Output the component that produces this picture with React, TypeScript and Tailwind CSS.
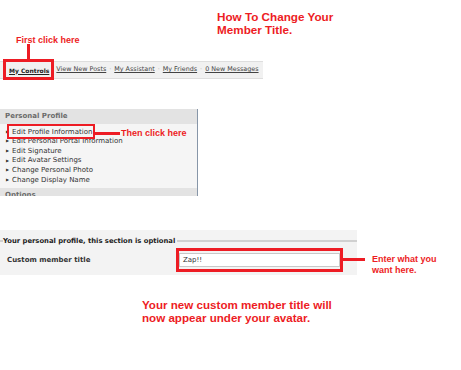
const NAV = ["View New Posts", "My Assistant", "My Friends", "0 New Messages"];

const PROFILE_LINKS = [
  "Edit Profile Information",
  "Edit Personal Portal Information",
  "Edit Signature",
  "Edit Avatar Settings",
  "Change Personal Photo",
  "Change Display Name",
];

const red = "text-[#ed1c24] font-bold [font-family:'Liberation_Sans',Arial,sans-serif]";

export default function App() {
  return (
    <div className="relative w-[461px] h-[370px] overflow-hidden bg-white [font-family:'DejaVu_Sans',Verdana,sans-serif]">
      {/* Top nav strip */}
      <div className="mt-[61px] flex h-[18px] w-[263px] items-center border-y border-[#dedede] bg-[#f1f1f1] pl-[9px] text-[6.4px] text-[#444]">
        <span className="mr-[7px] text-[6px] font-bold text-[#222] underline">My Controls</span>
        {NAV.map((n, i) => (
          <span key={n} className="flex items-center">
            {i > 0 && <span className="mx-[3px] text-[#aaa]">·</span>}
            <span className="underline">{n}</span>
          </span>
        ))}
      </div>

      {/* Personal profile menu */}
      <div className="mt-[30px] h-[87px] w-[198px] overflow-hidden border-r border-[#8796a8] bg-[#f5f5f5]">
        <div className="flex h-[15px] items-center bg-[#e3e3e3] pl-[5px] text-[7px] font-bold text-[#6b6b6b]">
          Personal Profile
        </div>
        <ul className="pt-[3px] pb-[3px]">
          {PROFILE_LINKS.map((l) => (
            <li key={l} className="flex h-[9.6px] items-center pl-[6px] text-[7px] text-[#333]">
              <span className="mr-[3px] text-[4px] text-[#333]">▶</span>
              {l}
            </li>
          ))}
        </ul>
        <div className="flex h-[15px] items-center bg-[#e3e3e3] pl-[5px] text-[7px] font-bold text-[#6b6b6b]">
          Options
        </div>
      </div>

      {/* Fieldset */}
      <div className="mt-[34px] h-[45px] w-[357px] bg-[#f3f3f3] pt-[6px]">
        <div className="flex items-center">
          <div className="h-[2px] w-[3px] border-y border-[#d0d0d0] bg-white" />
          <span className="text-[6.8px] font-bold text-[#222]">Your personal profile, this section is optional</span>
          <div className="ml-[2px] h-[2px] flex-1 border-y border-[#d0d0d0] bg-white" />
        </div>
        <div className="mt-[7px] flex items-center">
          <span className="ml-[7px] w-[172px] text-[7px] font-bold text-[#333]">Custom member title</span>
          <div className="flex h-[14px] w-[161px] items-center border border-[#c8c8c8] bg-white pl-[3px] text-[7px] text-[#333]">
            Zap!!
          </div>
        </div>
      </div>

      {/* Annotations */}
      <div className={`absolute left-[217px] top-[10px] text-[11.7px] leading-[13px] ${red}`}>
        How To Change Your
        <br />
        Member Title.
      </div>
      <div className={`absolute left-[16px] top-[35px] text-[9px] leading-[10px] ${red}`}>First click here</div>
      <div className="absolute left-[27px] top-[44px] h-[16px] w-[3px] bg-[#ed1c24]" />
      <div className="absolute left-[3px] top-[59px] h-[21px] w-[51px] border-[3px] border-[#ed1c24]" />

      <div className="absolute left-[7px] top-[124px] h-[15px] w-[88px] border-2 border-[#ed1c24]" />
      <div className="absolute left-[95px] top-[132px] h-[3px] w-[25px] bg-[#ed1c24]" />
      <div className={`absolute left-[121px] top-[128px] text-[9px] leading-[10px] ${red}`}>Then click here</div>

      <div className="absolute left-[176px] top-[248px] h-[24px] w-[167px] border-[3px] border-[#ed1c24]" />
      <div className="absolute left-[343px] top-[258px] h-[3px] w-[22px] bg-[#ed1c24]" />
      <div className={`absolute left-[372px] top-[254px] text-[9px] leading-[11px] ${red}`}>
        Enter what you
        <br />
        want here.
      </div>

      <div className={`absolute left-[142px] top-[298px] text-[11.6px] leading-[13px] ${red}`}>
        Your new custom member title will
        <br />
        now appear under your avatar.
      </div>
    </div>
  );
}
